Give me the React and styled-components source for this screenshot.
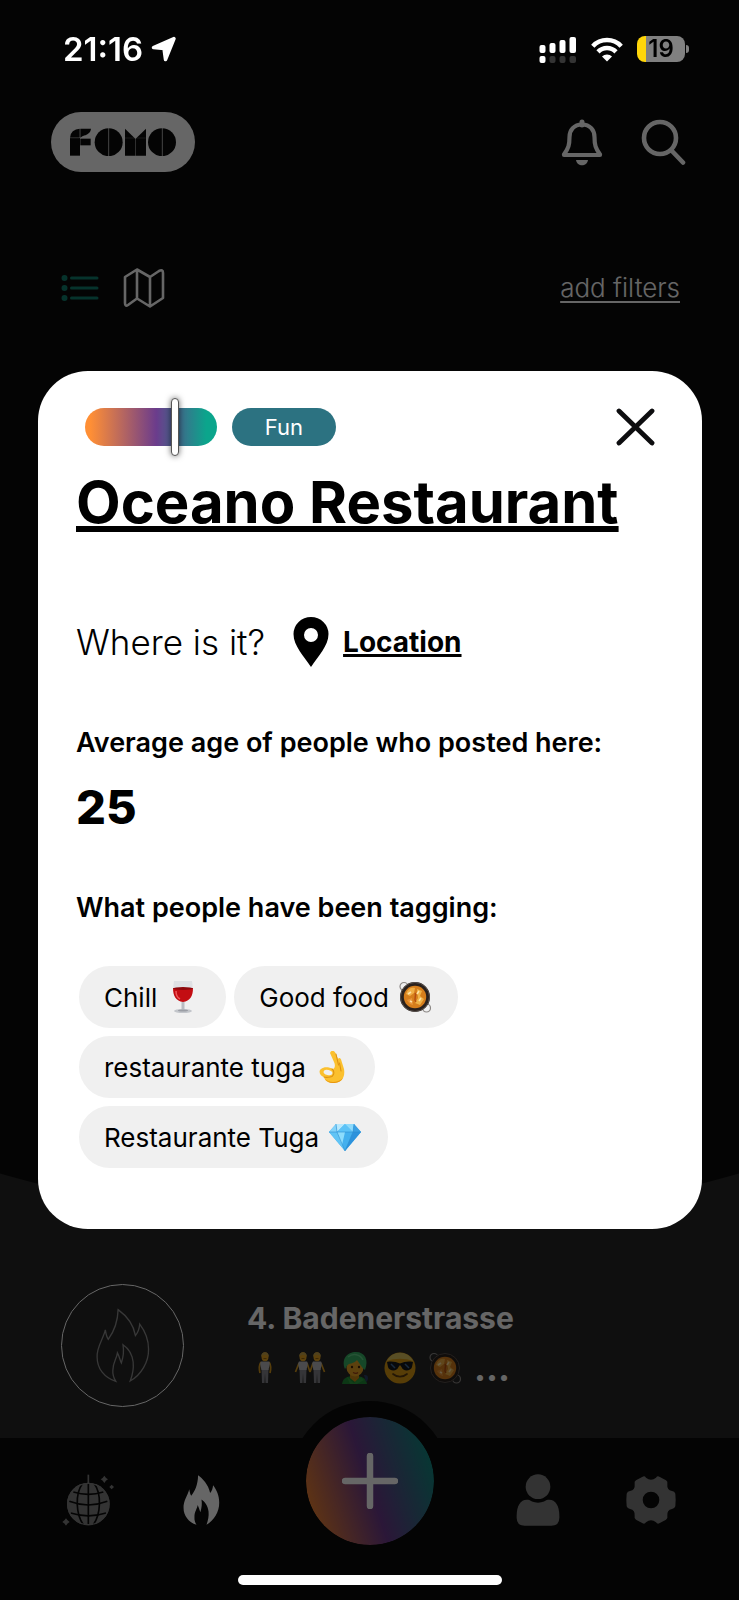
import React, { useState } from 'react';
import styled, { createGlobalStyle } from 'styled-components';

const GlobalStyle = createGlobalStyle`
  * {
    box-sizing: border-box;
  }
  body {
    margin: 0;
    background-color: #0b0b0b;
    font-family: Inter, 'Liberation Sans', sans-serif;
  }
  button {
    border: none;
    background: none;
    padding: 0;
    color: inherit;
    font: inherit;
    cursor: pointer;
  }
  svg {
    display: block;
    flex-shrink: 0;
  }
`;

const Screen = styled.div`
  min-height: 100vh;
  display: flex;
  flex-direction: column;
  color: #ffffff;
`;

const StatusBar = styled.div`
  height: 98px;
  padding: 0 50px 0 63px;
  display: flex;
  justify-content: space-between;
  align-items: center;
  position: relative;
  z-index: 3;
`;
const StatusGroup = styled.div`
  display: flex;
  align-items: center;
  gap: ${(props) => props.$gap}px;
`;
const Time = styled.span`
  font-size: 33px;
  line-height: 40px;
  font-weight: 600;
`;
const Battery = styled.div`
  display: flex;
  align-items: center;
  gap: 1px;
`;
const BatteryBody = styled.span`
  width: 48px;
  height: 26px;
  border-radius: 8px;
  background: linear-gradient(90deg, #ffd60a 9px, #808080 9px);
  color: #000000;
  font-size: 24px;
  line-height: 26px;
  font-weight: 600;
  text-align: center;
`;
const BatteryTip = styled.span`
  width: 3px;
  height: 8px;
  border-radius: 0 3px 3px 0;
  background-color: #808080;
`;

const Header = styled.header`
  padding: 14px 53px 0 51px;
  display: flex;
  justify-content: space-between;
  align-items: center;
`;
const LogoPill = styled.div`
  width: 144px;
  height: 60px;
  border-radius: 30px;
  background-color: #ffffff;
  display: flex;
  justify-content: center;
  align-items: center;
`;
const HeaderActions = styled.div`
  display: flex;
  gap: 38px;
`;

const Toolbar = styled.div`
  padding: 95px 59px 0 61px;
  display: flex;
  justify-content: space-between;
  align-items: center;
`;
const ViewSwitch = styled.div`
  display: flex;
  align-items: center;
  gap: 24px;
`;
const FilterLink = styled.a`
  color: #ffffff;
  font-size: 26px;
  line-height: 40px;
  font-weight: 300;
  text-underline-offset: 4px;
  text-decoration-thickness: 2px;
`;

const Feed = styled.main`
  margin-top: auto;
  padding: 111px 61px 31px;
  background: radial-gradient(
    circle at 50% -1286px,
    #0b0b0b 1338px,
    #262626 1339px
  );
`;
const Place = styled.article`
  display: flex;
  align-items: center;
  gap: 63px;
`;
const PlaceBadge = styled.div`
  width: 123px;
  height: 123px;
  flex-shrink: 0;
  border: 1px solid #ffffff;
  border-radius: 50%;
  display: flex;
  justify-content: center;
  align-items: center;
`;
const PlaceText = styled.div`
  display: flex;
  flex-direction: column;
  gap: 16px;
  padding-bottom: 7px;
`;
const PlaceName = styled.h2`
  margin: 0;
  font-size: 30px;
  line-height: 36px;
  font-weight: 700;
`;
const PlaceTags = styled.div`
  padding-left: 2px;
  display: flex;
  align-items: flex-end;
  gap: 13px;
`;
const More = styled.span`
  font-size: 36px;
  line-height: 32px;
  font-weight: 700;
`;

const Nav = styled.nav`
  height: 162px;
  background-color: #0b0b0b;
  display: grid;
  grid-template-columns: 1fr 160px 1fr;
  align-items: start;
`;
const NavSide = styled.div`
  padding: 36px 62px 0;
  display: flex;
  justify-content: space-between;
`;
const NavButton = styled.button`
  width: 52px;
  height: 52px;
  display: flex;
  justify-content: center;
  align-items: center;
`;
const AddButton = styled.button`
  width: 160px;
  height: 160px;
  margin-top: -37px;
  border: 16px solid #0b0b0b;
  border-radius: 50%;
  background: linear-gradient(72deg, #f5862c 6%, #6b3a8c 49%, #0b9080 94%)
    padding-box;
  display: flex;
  justify-content: center;
  align-items: center;
`;
const HomeBar = styled.div`
  position: fixed;
  z-index: 3;
  bottom: 15px;
  left: 50%;
  width: 264px;
  height: 10px;
  margin-left: -132px;
  border-radius: 5px;
  background-color: #ffffff;
`;

const Backdrop = styled.div`
  position: fixed;
  z-index: 2;
  inset: 0;
  padding: 0 37px 0 38px;
  background-color: rgba(0, 0, 0, 0.6);
  display: flex;
  align-items: center;
`;
const Modal = styled.section`
  flex: 1;
  padding: 37px 38px 61px;
  border-radius: 50px;
  background-color: #ffffff;
  color: #000000;
`;
const ModalHeader = styled.div`
  padding: 0 9px;
  display: flex;
  align-items: center;
  gap: 15px;
`;
const MoodSlider = styled.input`
  appearance: none;
  width: 132px;
  height: 38px;
  margin: 0;
  border-radius: 19px;
  background: linear-gradient(90deg, #ff8f35 4%, #6b3c8c 54%, #0ba58c 92%);

  &::-webkit-slider-runnable-track {
    height: 38px;
  }
  &::-webkit-slider-thumb {
    appearance: none;
    width: 8px;
    height: 58px;
    margin-top: -10px;
    border: 1px solid #555555;
    border-radius: 4px;
    background-color: #ffffff;
    box-shadow: 0 0 6px rgba(0, 0, 0, 0.6);
  }
`;
const Mood = styled.span`
  width: 104px;
  border-radius: 19px;
  background-color: #2c7281;
  color: #ffffff;
  font-size: 22px;
  line-height: 38px;
  text-align: center;
`;
const CloseButton = styled.button`
  margin-left: auto;
`;
const Title = styled.h1`
  margin: 20px 0 0;
  font-size: 58px;
  line-height: 72px;
  font-weight: 700;
  white-space: nowrap;
  text-decoration: underline;
  text-decoration-thickness: 6px;
  text-underline-offset: 3px;
  text-decoration-skip-ink: none;
`;
const Where = styled.div`
  margin-top: 79px;
  display: flex;
  align-items: center;
`;
const Question = styled.span`
  margin-right: 28px;
  font-size: 35px;
  line-height: 50px;
  font-weight: 300;
`;
const LocationLink = styled.a`
  display: flex;
  align-items: center;
  gap: 14px;
  color: #000000;
  font-size: 28px;
  line-height: 50px;
  font-weight: 700;
  text-decoration-thickness: 3px;
  text-underline-offset: 2px;
`;
const Label = styled.h2`
  margin: ${(props) => props.$top}px 0 0;
  font-size: 27px;
  line-height: 32px;
  font-weight: 600;
`;
const Age = styled.p`
  margin: 20px 0 0;
  font-size: 47px;
  line-height: 56px;
  font-weight: 800;
`;
const Tags = styled.ul`
  list-style: none;
  margin: 42px 0 0;
  padding: 0 3px;
  display: flex;
  flex-wrap: wrap;
  gap: 8px;
`;
const Tag = styled.li`
  height: 62px;
  padding: 0 27px 0 25px;
  border-radius: 31px;
  background-color: #f0f0f0;
  display: flex;
  align-items: center;
  gap: 10px;
  font-size: 26px;
`;

const Emoji = ({ label, children }) => (
  <svg width="32" height="32" viewBox="0 0 32 32" role="img" aria-label={label}>
    {children}
  </svg>
);

const Wine = () => (
  <Emoji label="wine">
    <path d="M7 0 H25 C27 10 25 19 16 21 C7 19 5 10 7 0Z" fill="#dfe1e4" />
    <path d="M6 7 H26 C26 15 23 20 16 21 C9 20 6 15 6 7Z" fill="#c30d12" />
    <ellipse cx="16" cy="7.500" rx="9.800" ry="1.500" fill="#8d070b" />
    <path d="M9 10 C9 14 11 17 13 18" stroke="#f0575a" strokeWidth="1.500" fill="none" />
    <path d="M14.500 21 H17.500 V29 H14.500Z" fill="#b9bcc2" />
    <ellipse cx="16" cy="30" rx="9" ry="2" fill="#c3c6cb" />
    <ellipse cx="16" cy="29.500" rx="5" ry="1" fill="#9b9ea5" />
  </Emoji>
);

const Paella = () => (
  <Emoji label="paella">
    <g fill="none" stroke="#8c8886" strokeWidth="1.200">
      <circle cx="5" cy="5.500" r="4" />
      <circle cx="27.500" cy="27" r="4" />
    </g>
    <circle cx="16" cy="16" r="15" fill="#2a211d" />
    <circle cx="16" cy="16" r="14.500" fill="none" stroke="#57504c" strokeWidth="1" />
    <circle cx="16" cy="16" r="11.200" fill="#d67e1c" />
    <path d="M7 13 C9 7 13 6 16 7 L15 12 L11 15Z" fill="#f0ae45" />
    <path d="M18 8 L23 10 L21 15 L25 18 L21 24 L16 22 L19 17Z" fill="#efb248" />
    <path d="M8 19 L13 17 L14 24 L11 23Z" fill="#e9953a" />
    <path d="M16 12 C18 15 14 18 17 21" stroke="#b54d11" strokeWidth="1.500" fill="none" />
    <path d="M9 13 L12 11 M20 20 L22 17 M11 20 L13 21 M20 10 L18 13" stroke="#ffe2a6" strokeWidth="1.600" />
  </Emoji>
);

const OkHand = () => (
  <Emoji label="ok hand">
    <path
      d="M14 2 C15 -1 18 -1 19.500 2 L22 8 C23 6 25 7 25.500 10 L28 18 C29.500 27 25 32 18 32 C12 32 9 30 8 26 C4 25 2 20 5 18 C8 15.500 13 16 17 18 C19 17 19.500 14 18 11Z"
      fill="#fbc02e"
    />
    <ellipse cx="12" cy="21.500" rx="4.500" ry="2.500" transform="rotate(14 12 21.500)" fill="#f0f0f0" />
    <path
      d="M20 3 L22.500 14 M23.500 12 L25 20 M16 18 C19 20 18 24 16 25.500 M8 26 C11 27 13 26 16 25.500"
      stroke="#dd9212"
      strokeWidth="1.100"
      fill="none"
      strokeLinecap="round"
    />
    <path d="M9 28 C13 32 22 32 27 27 C24 33 13 34 9 28Z" fill="#e8960f" />
  </Emoji>
);

const Gem = () => (
  <Emoji label="gem">
    <path d="M7 3 H25 L32 11 L16 30 L0 11Z" fill="#43b0ee" />
    <path d="M7 3 L0 11 H8Z" fill="#83d3fa" />
    <path d="M7 3 H16 L8 11Z" fill="#b7e8fd" />
    <path d="M16 3 L24 11 H8Z" fill="#5cc3f7" />
    <path d="M16 3 H25 L24 11Z" fill="#8ddafb" />
    <path d="M25 3 L32 11 H24Z" fill="#3a9fe3" />
    <path d="M0 11 H8 L16 30Z" fill="#61c4f5" />
    <path d="M24 11 H32 L16 30Z" fill="#2c92dc" />
    <path d="M8 11 L13 24 L16 11Z" fill="#8cdcfc" />
    <path d="M0 11 H32 M7 3 L8 11 L16 30 L24 11 L25 3" stroke="#2d8fd0" strokeWidth="0.600" fill="none" />
  </Emoji>
);

const Figure = ({ x, arms }) => (
  <g transform={`translate(${x} 0)`}>
    <path d="M-3.500 17 H3.500 L3 31 H0.500 L0 21 L-0.500 31 H-3Z" fill="#85858c" />
    <path d={arms} stroke="#d79a1c" strokeWidth="1.700" fill="none" />
    <path d="M-4 9.500 H4 C5.500 11 4.500 14 3.500 18 H-3.500 C-4.500 14 -5.500 11 -4 9.500Z" fill="#b9b9bd" />
    <ellipse cy="4.800" rx="3.500" ry="4.500" fill="#e5a41f" />
    <path d="M-3.800 5 C-4.500 -1.500 4.500 -1.500 3.800 5 C2 2 -2 2 -3.800 5Z" fill="#c8a44a" />
    <path d="M-1.500 6.500 H1.500" stroke="#7a4a0c" strokeWidth="0.700" />
  </g>
);

const Person = () => (
  <Emoji label="person standing">
    <Figure x={16} arms="M-4 10 C-6 13 -6 17 -5 21 M4 10 C6 13 6 17 5 21" />
  </Emoji>
);

const Couple = () => (
  <Emoji label="people holding hands">
    <Figure x={9} arms="M-4 11 L-7.500 20 M4 11 L7 20" />
    <Figure x={23} arms="M4 11 L7.500 20 M-4 11 L-7 20" />
  </Emoji>
);

const GreenHair = () => (
  <Emoji label="person with green hair">
    <path d="M3 32 C4 25 9 24 16 24 C23 24 27 26 28 32Z" fill="#1e8a35" />
    <path d="M25 23 C30 22 30 28 27 30Z" fill="#2b3f66" />
    <path d="M11 20 H20 V26 L16 30 L11 26Z" fill="#c98716" />
    <ellipse cx="16" cy="15.500" rx="8.500" ry="9" fill="#e5a424" />
    <path d="M6 17 C2 7 8 0 17 0 C26 0 30 8 26 18 C23 16 21 12 18 8 C15 12 9 11 8 14 C7 15 7 16 6 17Z" fill="#37b264" />
    <path d="M9 5 C14 1 21 2 24 8" stroke="#62cf88" strokeWidth="1.500" fill="none" />
    <circle cx="13" cy="15" r="1.200" fill="#442307" />
    <circle cx="20" cy="15" r="1.200" fill="#442307" />
    <path d="M14 20.500 C16 21.500 18 21.500 19 20.500" stroke="#9b3d17" strokeWidth="1.200" fill="none" />
    <path d="M8 25 L15 31 L22 25 L25 28 L18 32 H11Z" fill="#2f9d3f" />
  </Emoji>
);

const Cool = () => (
  <Emoji label="smiling face with sunglasses">
    <circle cx="16" cy="16" r="15.500" fill="#d99a12" />
    <path d="M3 9 C8 -2 24 -2 29 9 C22 6 10 6 3 9Z" fill="#dcc45e" />
    <path d="M3 10 C8 9 12 10 16 11.500 C20 10 24 9 29 10 L28 15 C27 19 19 20 17.500 15 L16 13 L14.500 15 C13 20 5 19 4 15Z" fill="#15171c" />
    <path d="M7 12 L11 16 M21 12 L25 16" stroke="#41699a" strokeWidth="1.500" />
    <path d="M9 22 C13 25.500 19 25.500 23 22" stroke="#59380d" strokeWidth="1.700" fill="none" strokeLinecap="round" />
  </Emoji>
);

const flame =
  'M70 5 C88 18 116 45 123 84 C130 76 135 62 136 49 C152 70 163 95 163 125 C164 165 140 205 107 223 C114 205 118 185 116 165 C113 140 100 122 85 112 C88 130 86 150 80 168 C76 160 74 148 68 137 C66 155 54 165 54 190 C53 203 57 214 63 224 C28 212 6 185 6 150 C4 118 25 95 31 67 C33 80 36 90 40 96 C55 75 69 50 70 5Z';

const LocationArrow = () => (
  <svg width="26" height="26" viewBox="0 0 26 26">
    <path d="M23 2.500 L2.500 11.500 L13 12.500 L14.500 23.500Z" fill="#fff" stroke="#fff" strokeWidth="3.500" strokeLinejoin="round" />
  </svg>
);

const Signal = () => (
  <svg width="38" height="27" viewBox="0 0 38 27">
    <g fill="#fff">
      <rect x="0.500" y="9" width="6" height="8" rx="2" />
      <rect x="10.500" y="7" width="6" height="10" rx="2" />
      <rect x="20.500" y="4" width="6" height="13" rx="2" />
      <rect x="30.500" y="1" width="6.500" height="16" rx="2" />
      <rect x="0.500" y="20" width="6" height="7" rx="2" />
    </g>
    <g fill="#343434">
      <rect x="10.500" y="20" width="6" height="7" rx="2" />
      <rect x="20.500" y="20" width="6" height="7" rx="2" />
      <rect x="30.500" y="20" width="6.500" height="7" rx="2" />
    </g>
  </svg>
);

const Wifi = () => (
  <svg width="32" height="25" viewBox="0 0 32 25">
    <g fill="none" stroke="#fff" strokeWidth="4.500">
      <path d="M1.800 9.200 C9.500 1 22.500 1 30.200 9.200" />
      <path d="M7 14.800 C12 9.700 20 9.700 25 14.800" />
    </g>
    <path d="M16 24.500 L11 19.500 C13.500 16.700 18.500 16.700 21 19.500Z" fill="#fff" />
  </svg>
);

const Logo = () => (
  <svg width="108" height="28" viewBox="0 0 324 84" role="img" aria-label="FOMO">
    <g fill="#0b0b0b">
      <path d="M3 29 A29 27 0 0 1 32 2 V29Z" />
      <rect x="3" y="30" width="30" height="53" />
      <path d="M34 2 H66 C65 16 52 20 48 22 C42 24 38 26 34 29Z" />
      <rect x="34" y="32" width="31" height="20" />
      <circle cx="119" cy="42.500" r="42" />
      <path d="M168 2 L199 32 V83 H168Z" />
      <path d="M231 2 L200 32 V83 H231Z" />
      <circle cx="279" cy="42.500" r="42" />
    </g>
    <path d="M119 0 V84 M280 0 V84" stroke="#fff" strokeWidth="2" />
    <path d="M3 30 H32 M168 30 H230" stroke="#fff" strokeWidth="0.700" />
  </svg>
);

const Bell = () => (
  <svg width="42" height="48" viewBox="0 0 42 48">
    <path
      d="M21 6.500 C13 6.500 8.500 12 8.500 19 C8.500 27 7.500 30 3 36.500 V37 H39 V36.500 C34.500 30 33.500 27 33.500 19 C33.500 12 29 6.500 21 6.500Z"
      fill="none"
      stroke="#fff"
      strokeWidth="4.200"
      strokeLinejoin="round"
    />
    <path d="M21 4 V7" stroke="#fff" strokeWidth="5" strokeLinecap="round" />
    <path d="M15 42 H27 C26 49 16 49 15 42Z" fill="#fff" />
  </svg>
);

const Search = () => (
  <svg width="45" height="48" viewBox="0 0 45 48">
    <g fill="none" stroke="#fff" strokeWidth="4.600" strokeLinecap="round">
      <circle cx="19" cy="20" r="16" />
      <path d="M31 33 L42 44.500" />
    </g>
  </svg>
);

const ListIcon = () => (
  <svg width="38" height="28" viewBox="0 0 38 28">
    <g fill="#11806e" stroke="#11806e" strokeWidth="3" strokeLinecap="round">
      <circle cx="3.500" cy="4" r="1.500" />
      <circle cx="3.500" cy="14" r="1.500" />
      <circle cx="3.500" cy="24" r="1.500" />
      <path d="M10.500 4 H36 M10.500 14 H36 M10.500 24 H36" />
    </g>
  </svg>
);

const MapIcon = () => (
  <svg width="42" height="42" viewBox="0 0 42 42">
    <path
      d="M2 10 L14 2.500 L27 10 L36 4 Q40 2 40 6 V31 L27 39.500 L14 31.500 L5 38 Q2 40 2 36Z M14 2.500 V31.500 M27 10 V39.500"
      fill="none"
      stroke="#fff"
      strokeWidth="2.600"
      strokeLinejoin="round"
    />
  </svg>
);

const CloseIcon = () => (
  <svg width="39" height="38" viewBox="0 0 39 38">
    <path d="M3 3 L36 35 M36 3 L3 35" stroke="#0d0d0f" strokeWidth="4.800" strokeLinecap="round" />
  </svg>
);

const Pin = () => (
  <svg width="36" height="50" viewBox="0 0 36 50">
    <path
      d="M18 0 A17.500 17 0 0 1 35.500 17 C35.500 29 25 39 18 50 C11 39 0.500 29 0.500 17 A17.500 17 0 0 1 18 0Z M18 11 A7 7 0 1 0 18 25 A7 7 0 1 0 18 11Z"
      fill="#000"
      fillRule="evenodd"
    />
  </svg>
);

const DiscoBall = () => (
  <svg width="52" height="52" viewBox="0 0 156 156">
    <path d="M79 2 V30" stroke="#808080" strokeWidth="5" />
    <circle cx="79" cy="90" r="64" fill="#808080" />
    <g fill="none" stroke="#0b0b0b" strokeWidth="5">
      <path d="M79 28 V152 M62 28 C38 60 42 122 64 152 M96 28 C120 60 116 122 94 152" />
      <path d="M34 54 Q79 68 124 54 M22 82 Q79 104 136 82 M26 117 Q79 134 132 117" />
    </g>
    <circle cx="79" cy="90" r="62" fill="none" stroke="#808080" strokeWidth="4" />
    <g fill="#808080">
      <path d="M127 5 Q131 12 138 16 Q131 20 127 27 Q123 20 116 16 Q123 12 127 5Z" />
      <path d="M149 32 L156 39 L149 46 L142 39Z" />
      <path d="M12 133 Q16 140 23 144 Q16 148 12 155 Q8 148 1 144 Q8 140 12 133Z" />
    </g>
  </svg>
);

const UserIcon = () => (
  <svg width="44" height="52" viewBox="0 0 132 156">
    <path d="M2 125 C2 95 14 77 32 77 H100 C118 77 130 95 130 125 V131 Q130 155 106 155 H26 Q2 155 2 131Z" fill="#808080" />
    <circle cx="66" cy="39" r="47" fill="#0b0b0b" />
    <circle cx="66" cy="38" r="37" fill="#808080" />
  </svg>
);

const Gear = () => (
  <svg width="50" height="50" viewBox="0 0 150 150">
    <path
      d="M50 5 Q56 2 60 8 Q75 20 90 8 Q94 2 100 5 L120 16 Q126 20 124 27 Q122 45 138 48 Q146 49 148 56 Q150 75 148 94 Q146 101 138 102 Q122 105 124 123 Q126 130 120 134 L100 145 Q94 148 90 142 Q75 130 60 142 Q56 148 50 145 L30 134 Q24 130 26 123 Q28 105 12 102 Q4 101 2 94 Q0 75 2 56 Q4 49 12 48 Q28 45 26 27 Q24 20 30 16Z"
      fill="#808080"
    />
    <circle cx="75" cy="75" r="25" fill="#0b0b0b" />
  </svg>
);

const tags = [
  { name: 'Chill', icon: <Wine /> },
  { name: 'Good food', icon: <Paella /> },
  { name: 'restaurante tuga', icon: <OkHand /> },
  { name: 'Restaurante Tuga', icon: <Gem /> }
];

const App = () => {
  const [mood, setMood] = useState(69);

  return (
    <Screen>
      <GlobalStyle />
      <StatusBar>
        <StatusGroup $gap={8}>
          <Time>21:16</Time>
          <LocationArrow />
        </StatusGroup>
        <StatusGroup $gap={14}>
          <Signal />
          <Wifi />
          <Battery>
            <BatteryBody>19</BatteryBody>
            <BatteryTip />
          </Battery>
        </StatusGroup>
      </StatusBar>

      <Header>
        <LogoPill>
          <Logo />
        </LogoPill>
        <HeaderActions>
          <button aria-label="Notifications">
            <Bell />
          </button>
          <button aria-label="Search">
            <Search />
          </button>
        </HeaderActions>
      </Header>

      <Toolbar>
        <ViewSwitch>
          <button aria-label="List view">
            <ListIcon />
          </button>
          <button aria-label="Map view">
            <MapIcon />
          </button>
        </ViewSwitch>
        <FilterLink href="#filters">add filters</FilterLink>
      </Toolbar>

      <Feed>
        <Place>
          <PlaceBadge>
            <svg width="56" height="75" viewBox="0 0 170 229">
              <path d={flame} fill="none" stroke="#8c8c8c" strokeWidth="4" />
            </svg>
          </PlaceBadge>
          <PlaceText>
            <PlaceName>4. Badenerstrasse</PlaceName>
            <PlaceTags>
              <Person />
              <Couple />
              <GreenHair />
              <Cool />
              <Paella />
              <More>...</More>
            </PlaceTags>
          </PlaceText>
        </Place>
      </Feed>

      <Nav>
        <NavSide>
          <NavButton aria-label="Parties">
            <DiscoBall />
          </NavButton>
          <NavButton aria-label="Hot places">
            <svg width="39" height="52" viewBox="0 0 170 229">
              <path d={flame} fill="#fff" />
            </svg>
          </NavButton>
        </NavSide>
        <AddButton aria-label="Add post">
          <svg width="56" height="56" viewBox="0 0 56 56">
            <path d="M28 3 V53 M3 28 H53" stroke="#fff" strokeWidth="6.500" strokeLinecap="round" />
          </svg>
        </AddButton>
        <NavSide>
          <NavButton aria-label="Profile">
            <UserIcon />
          </NavButton>
          <NavButton aria-label="Settings">
            <Gear />
          </NavButton>
        </NavSide>
      </Nav>

      <Backdrop>
        <Modal role="dialog" aria-labelledby="place-title">
          <ModalHeader>
            <MoodSlider
              type="range"
              aria-label="Mood"
              min="0"
              max="100"
              value={mood}
              onChange={(e) => setMood(Number(e.target.value))}
            />
            <Mood>Fun</Mood>
            <CloseButton aria-label="Close">
              <CloseIcon />
            </CloseButton>
          </ModalHeader>
          <Title id="place-title">Oceano Restaurant</Title>
          <Where>
            <Question>Where is it?</Question>
            <LocationLink href="#location">
              <Pin />
              Location
            </LocationLink>
          </Where>
          <Label $top={60}>Average age of people who posted here:</Label>
          <Age>25</Age>
          <Label $top={57}>What people have been tagging:</Label>
          <Tags>
            {tags.map((tag) => (
              <Tag key={tag.name}>
                {tag.name}
                {tag.icon}
              </Tag>
            ))}
          </Tags>
        </Modal>
      </Backdrop>
      <HomeBar />
    </Screen>
  );
};

export default App;
